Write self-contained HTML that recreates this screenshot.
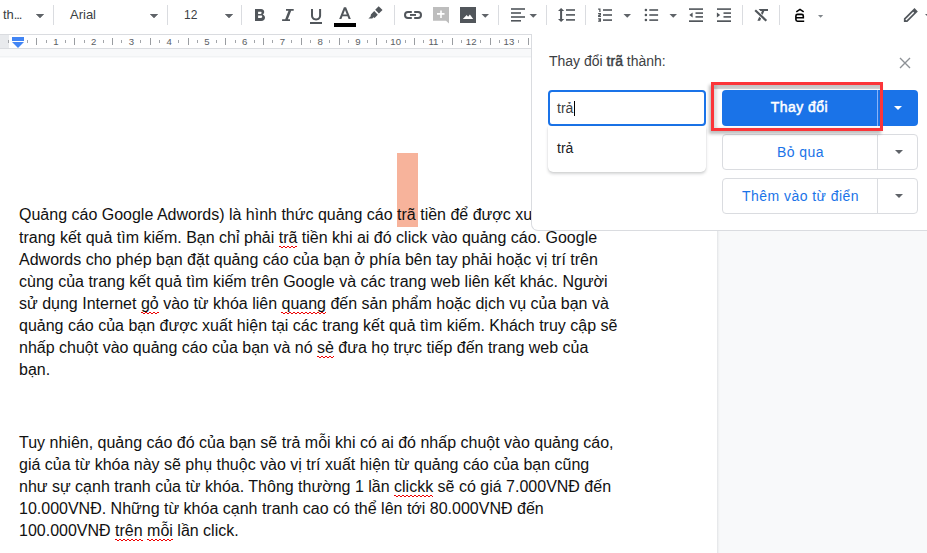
<!DOCTYPE html>
<html><head><meta charset="utf-8">
<style>
*{box-sizing:border-box}
html,body{margin:0;padding:0}
body{width:927px;height:553px;overflow:hidden;position:relative;background:#fff;font-family:"Liberation Sans",sans-serif}
.a{position:absolute}
.sep{position:absolute;top:5px;width:1px;height:20px;background:#dadce0}
.arr{position:absolute;width:0;height:0;border-left:4px solid transparent;border-right:4px solid transparent;border-top:4px solid #5f6368}
.tb{color:#3c4043;font-size:13px;position:absolute;top:7px;line-height:16px}
.rn{position:absolute;top:35px;font-size:10px;line-height:12px;color:#444;text-align:center;width:20px}
.tick{position:absolute;width:1px;background:#9aa0a6}
.doc{position:absolute;left:19px;font-size:16px;line-height:22.1px;color:#111;white-space:pre}
.sq{position:relative}.sq::after{content:"";position:absolute;left:0;right:0;top:17px;height:2px;background:repeating-linear-gradient(to right,#e00 0 2px,transparent 2px 4px) 0 0/100% 1px no-repeat,repeating-linear-gradient(to right,transparent 0 2px,#e00 2px 4px) 0 1px/100% 1px no-repeat}
.btn{position:absolute;left:722px;width:196px;height:36px;border:1px solid #dadce0;border-radius:4px;background:#fff}
.btn .lbl{position:absolute;left:0;width:155px;top:0;height:34px;line-height:34px;text-align:center;color:#1a73e8;font-size:14px;letter-spacing:0.45px}
.btn .dv{position:absolute;left:154px;top:0;width:1px;height:34px;background:#dadce0}
</style></head><body>

<!-- toolbar -->
<div class="tb" style="left:3px">th<span style="letter-spacing:-1.1px">...</span></div>
<div class="arr" style="left:36px;top:14px"></div>
<div class="sep" style="left:53px"></div>
<div class="tb" style="left:70px">Arial</div>
<div class="arr" style="left:150px;top:14px"></div>
<div class="sep" style="left:167px"></div>
<div class="tb" style="left:184px;font-size:12px">12</div>
<div class="arr" style="left:225px;top:14px"></div>
<div class="sep" style="left:241px"></div>
<div class="sep" style="left:394px"></div>
<div class="sep" style="left:498px"></div>
<div class="sep" style="left:546px"></div>
<div class="sep" style="left:585px"></div>
<div class="sep" style="left:742px"></div>
<div class="sep" style="left:779px"></div>

<svg class="a" style="left:0;top:0" width="927" height="34" viewBox="0 0 927 34">
<g fill="#51565b">
<!-- B -->
<path fill-rule="evenodd" d="M255 9H261C263.2 9 264.2 10.4 264.2 12C264.2 13.1 263.6 14 262.7 14.5C264 14.9 265 16.1 265 17.6C265 19.6 263.6 21 261.2 21H255ZM258.1 11.7V13.9H260.6C261.3 13.9 261.6 13.4 261.6 12.8C261.6 12.2 261.3 11.7 260.6 11.7ZM258.1 15.5V17.9H261C261.8 17.9 262.2 17.3 262.2 16.7C262.2 16.1 261.8 15.5 261 15.5Z"/>
<!-- I -->
<path d="M286 9H293.7V10.8H291.2L287.9 19.2H290V21H282.1V19.2H285.2L288.5 10.8H286Z"/>
<!-- U -->
<path d="M311 9H313V15.5C313 17.3 314.3 18.5 316.1 18.5C317.9 18.5 319.1 17.3 319.1 15.5V9H321.1V15.5C321.1 18.5 319 20.4 316.1 20.4C313.2 20.4 311 18.5 311 15.5Z"/>
<rect x="310" y="22" width="12" height="2"/>
<!-- A -->
<path fill-rule="evenodd" d="M343.9 7.3H346.1L350.8 19H348.6L347.5 16.3H342.5L341.4 19H339.2ZM343.2 14.5H346.8L345 10Z"/>
<!-- highlighter -->
<path d="M378.7 6.3L382.5 9.9L378.9 13.4L375.2 9.8Z"/>
<path d="M374.2 11.1L377.8 14.7L374.6 18L373.4 17.3L372.3 18.6H368.4L370.6 16.4L370.9 14.5Z"/>
<!-- link -->
<path fill="none" stroke="#51565b" stroke-width="2" d="M411.8 12H408A3 3 0 0 0 408 18H411.8M414.2 12H418A3 3 0 0 1 418 18H414.2"/>
<rect x="410" y="14" width="6" height="1.9"/>
<!-- image -->
<path fill-rule="evenodd" d="M460 7H476V23H460ZM462.8 19H473.2L469.9 14.4L468.1 16.8L466.7 15.1Z"/>
<!-- align left -->
<rect x="511" y="8.2" width="14" height="1.6"/><rect x="511" y="12.2" width="10" height="1.6"/><rect x="511" y="16.2" width="14" height="1.6"/><rect x="511" y="20" width="10" height="1.6"/>
<!-- line spacing -->
<path d="M561.1 8L564.2 10.9H562.1V19H564.2L561.1 22L558 19H560.1V10.9H558Z"/>
<rect x="566" y="9.2" width="9" height="1.6"/><rect x="566" y="14.1" width="9" height="1.6"/><rect x="566" y="19.1" width="9" height="1.6"/>
<!-- numbered -->
<rect x="603" y="9.2" width="9" height="1.6"/><rect x="603" y="14.2" width="9" height="1.6"/><rect x="603" y="19.3" width="9" height="1.6"/>
<path fill="none" stroke="#51565b" stroke-width="1.25" d="M598.1 9H599.9V11.9M598.1 13.7H600.4V14.7L598.7 15.6V16.3H601M598.1 18.8H600.4V21.2H598.1M599.2 20H600.4"/>
<!-- bulleted -->
<circle cx="645.9" cy="10" r="1.3"/><circle cx="645.9" cy="15" r="1.3"/><circle cx="645.9" cy="20" r="1.3"/>
<rect x="649.3" y="9.2" width="8.8" height="1.6"/><rect x="649.3" y="14.2" width="8.8" height="1.6"/><rect x="649.3" y="19.3" width="8.8" height="1.6"/>
<!-- decrease indent -->
<rect x="689" y="8.3" width="14" height="1.6"/><rect x="695.5" y="12.3" width="7.5" height="1.6"/><rect x="695.5" y="16.1" width="7.5" height="1.6"/><rect x="689" y="20.3" width="14" height="1.7"/>
<path d="M692.6 12.5V17.4L689.3 14.95Z"/>
<!-- increase indent -->
<rect x="717" y="8.3" width="14" height="1.6"/><rect x="723.5" y="12.3" width="7.5" height="1.6"/><rect x="723.5" y="16.1" width="7.5" height="1.6"/><rect x="717" y="20.3" width="14" height="1.7"/>
<path d="M716.9 12.5V17.4L720.2 14.95Z"/>
<!-- clear formatting -->
<path d="M758.6 9H768V10.9H760.4ZM762.2 10.5H764.5L760.1 20.8H757.4Z"/>
<path stroke="#fff" stroke-width="3.8" d="M754.5 9.6L766.6 21"/>
<path stroke="#51565b" stroke-width="2.2" d="M755.2 10.2L766.3 20.7"/>
<!-- pencil -->
<path d="M914.5 8.1L917.8 11.4L907.3 21.9H903.9V18.6Z"/>
<path stroke="#fff" stroke-width="1.4" d="M905.9 20L913.7 12.2"/>
</g>
<g fill="#5f6368">
<path d="M36 14H44L40 18Z"/><path d="M150 14H158L154 18Z"/><path d="M225 14H233L229 18Z"/>
<path d="M481.5 14H489L485.25 17.8Z"/>
<path d="M529.5 14H537L533.25 17.8Z"/>
<path d="M623.5 14H631L627.25 17.8Z"/>
<path d="M669.5 14H677L673.25 17.8Z"/>

<path d="M925 14H933L929 18Z"/>
</g>
<path fill="#80868b" d="M818 15H823.2L820.6 17.8Z"/>
<!-- comment disabled -->
<path fill="#bdbdbd" d="M433 7H449V23.5L446 20.8H433Z"/>
<path fill="#fff" d="M440.2 10.4H441.8V13.1H444.5V14.7H441.8V17.9H440.2V14.7H437V13.1H440.2Z"/>
<!-- text color bar -->
<rect x="334" y="23" width="22" height="4" fill="#000"/>
</svg>
<svg class="a" style="left:790px;top:5px" width="20" height="20" viewBox="790 5 20 20"><path fill="none" stroke="#000" stroke-width="1.6" d="M795.9 17.7H803.3V16Q803.3 14.4 801.7 14.4H797.5Q795.9 14.4 795.9 16V19.6Q795.9 21.2 797.5 21.2H804.2M796.3 11.8L800 9.4L803.7 11.8"/></svg>

<!-- ruler -->
<svg class="a" style="left:0;top:0" width="531" height="60" viewBox="0 0 531 60">
<rect x="0" y="34" width="531" height="1" fill="#dadce0"/>
<rect x="0" y="35" width="531" height="13" fill="#fff"/>
<rect x="0" y="35" width="9" height="13" fill="#e8eaed"/>
<rect x="0" y="48" width="531" height="1" fill="#dadce0"/>
<rect x="0" y="49" width="531" height="7" fill="#f8f9fa"/>
<rect x="0" y="56" width="531" height="1" fill="#f1f3f4"/>
<rect x="0" y="57" width="531" height="1" fill="#f8f9fa"/>
<g font-family="Liberation Sans" font-size="9.6" fill="#5a5e63"><rect x="8" y="40" width="1" height="3" fill="#a3a6aa"/>
<rect x="27" y="40" width="1" height="3" fill="#a3a6aa"/>
<rect x="36" y="38" width="1" height="7" fill="#9a9da1"/>
<rect x="46" y="40" width="1" height="3" fill="#a3a6aa"/>
<text x="55.84" y="45" text-anchor="middle">1</text>
<rect x="65" y="40" width="1" height="3" fill="#a3a6aa"/>
<rect x="74" y="38" width="1" height="7" fill="#9a9da1"/>
<rect x="84" y="40" width="1" height="3" fill="#a3a6aa"/>
<text x="93.60" y="45" text-anchor="middle">2</text>
<rect x="103" y="40" width="1" height="3" fill="#a3a6aa"/>
<rect x="112" y="38" width="1" height="7" fill="#9a9da1"/>
<rect x="121" y="40" width="1" height="3" fill="#a3a6aa"/>
<text x="131.36" y="45" text-anchor="middle">3</text>
<rect x="140" y="40" width="1" height="3" fill="#a3a6aa"/>
<rect x="150" y="38" width="1" height="7" fill="#9a9da1"/>
<rect x="159" y="40" width="1" height="3" fill="#a3a6aa"/>
<text x="169.12" y="45" text-anchor="middle">4</text>
<rect x="178" y="40" width="1" height="3" fill="#a3a6aa"/>
<rect x="188" y="38" width="1" height="7" fill="#9a9da1"/>
<rect x="197" y="40" width="1" height="3" fill="#a3a6aa"/>
<text x="206.88" y="45" text-anchor="middle">5</text>
<rect x="216" y="40" width="1" height="3" fill="#a3a6aa"/>
<rect x="225" y="38" width="1" height="7" fill="#9a9da1"/>
<rect x="235" y="40" width="1" height="3" fill="#a3a6aa"/>
<text x="244.64" y="45" text-anchor="middle">6</text>
<rect x="254" y="40" width="1" height="3" fill="#a3a6aa"/>
<rect x="263" y="38" width="1" height="7" fill="#9a9da1"/>
<rect x="272" y="40" width="1" height="3" fill="#a3a6aa"/>
<text x="282.40" y="45" text-anchor="middle">7</text>
<rect x="291" y="40" width="1" height="3" fill="#a3a6aa"/>
<rect x="301" y="38" width="1" height="7" fill="#9a9da1"/>
<rect x="310" y="40" width="1" height="3" fill="#a3a6aa"/>
<text x="320.16" y="45" text-anchor="middle">8</text>
<rect x="329" y="40" width="1" height="3" fill="#a3a6aa"/>
<rect x="339" y="38" width="1" height="7" fill="#9a9da1"/>
<rect x="348" y="40" width="1" height="3" fill="#a3a6aa"/>
<text x="357.92" y="45" text-anchor="middle">9</text>
<rect x="367" y="40" width="1" height="3" fill="#a3a6aa"/>
<rect x="376" y="38" width="1" height="7" fill="#9a9da1"/>
<rect x="386" y="40" width="1" height="3" fill="#a3a6aa"/>
<text x="395.68" y="45" text-anchor="middle">10</text>
<rect x="405" y="40" width="1" height="3" fill="#a3a6aa"/>
<rect x="414" y="38" width="1" height="7" fill="#9a9da1"/>
<rect x="423" y="40" width="1" height="3" fill="#a3a6aa"/>
<text x="433.44" y="45" text-anchor="middle">11</text>
<rect x="442" y="40" width="1" height="3" fill="#a3a6aa"/>
<rect x="452" y="38" width="1" height="7" fill="#9a9da1"/>
<rect x="461" y="40" width="1" height="3" fill="#a3a6aa"/>
<text x="471.20" y="45" text-anchor="middle">12</text>
<rect x="480" y="40" width="1" height="3" fill="#a3a6aa"/>
<rect x="490" y="38" width="1" height="7" fill="#9a9da1"/>
<rect x="499" y="40" width="1" height="3" fill="#a3a6aa"/>
<text x="508.96" y="45" text-anchor="middle">13</text>
<rect x="518" y="40" width="1" height="3" fill="#a3a6aa"/>
<rect x="528" y="38" width="1" height="7" fill="#9a9da1"/></g>
<rect x="12" y="37" width="12" height="4" fill="#4285f4"/>
<path d="M12 42H24L18 48Z" fill="#4285f4"/>
</svg>
<!-- page bg right -->
<div class="a" style="left:717px;top:57px;width:210px;height:496px;background:linear-gradient(to right,#e2e3e5 0,#eceef0 1px,#f4f5f6 2px,#f8f9fa 3px)"></div>

<!-- highlight -->
<div class="a" style="left:397px;top:153px;width:21px;height:74px;background:#f7b39b"></div>

<!-- doc text -->
<div class="doc" style="top:204px">Quảng cáo Google Adwords) là hình thức quảng cáo trã tiền để được xuất hiện</div>
<div class="doc" style="top:227px">trang kết quả tìm kiếm. Bạn chỉ phải <span class="sq">trã</span> tiền khi ai đó click vào quảng cáo. Google</div>
<div class="doc" style="top:249px">Adwords cho phép bạn đặt quảng cáo của bạn ở phía bên tay phải hoặc vị trí trên</div>
<div class="doc" style="top:271px">cùng của trang kết quả tìm kiếm trên Google và các trang web liên kết khác. Người</div>
<div class="doc" style="top:293px">sử dụng Internet <span class="sq">gỏ</span> vào từ khóa liên <span class="sq">quang</span> đến sản phẩm hoặc dịch vụ của bạn và</div>
<div class="doc" style="top:315px">quảng cáo của bạn được xuất hiện tại các trang kết quả tìm kiếm. Khách truy cập sẽ</div>
<div class="doc" style="top:337px">nhấp chuột vào quảng cáo của bạn và nó <span class="sq">sẻ</span> đưa họ trực tiếp đến trang web của</div>
<div class="doc" style="top:359px">bạn.</div>
<div class="doc" style="top:432px">Tuy nhiên, quảng cáo đó của bạn sẽ trả mỗi khi có ai đó nhấp chuột vào quảng cáo,</div>
<div class="doc" style="top:454px">giá của từ khóa này sẽ phụ thuộc vào vị trí xuất hiện từ quảng cáo của bạn cũng</div>
<div class="doc" style="top:476px">như sự cạnh tranh của từ khóa. Thông thường 1 lần <span class="sq">clickk</span> sẽ có giá 7.000VNĐ đến</div>
<div class="doc" style="top:498px">10.000VNĐ. Những từ khóa cạnh tranh cao có thể lên tới 80.000VNĐ đến</div>
<div class="doc" style="top:520px">100.000VNĐ <span class="sq">trên</span> <span class="sq">mỗi</span> lần click.</div>

<!-- popup -->
<div class="a" style="left:531px;top:34px;width:400px;height:197px;background:#fff;border-left:1px solid #dadce0;border-bottom:1px solid #dadce0;border-radius:0 0 0 7px"></div>
<div class="a" style="left:549px;top:52px;font-size:14px;line-height:18px;color:#3c4043">Thay đổi <span style="-webkit-text-stroke:0.45px #3c4043">trã</span> thành:</div>
<svg class="a" style="left:899px;top:57px" width="12" height="12" viewBox="0 0 12 12"><path d="M1 1L11 11M11 1L1 11" stroke="#8d9196" stroke-width="1.4"/></svg>
<div class="a" style="left:548px;top:90px;width:158px;height:36px;border:2px solid #1a73e8;border-radius:4px"></div>
<div class="a" style="left:557px;top:99px;font-size:14px;line-height:18px;color:#3c4043">trả</div>
<div class="a" style="left:574px;top:101px;width:1px;height:15px;background:#000"></div>
<div class="a" style="left:548px;top:126px;width:158px;height:46px;background:#fff;border-radius:0 0 5px 5px;box-shadow:0 2px 3px rgba(60,64,67,.22),0 0 1px rgba(60,64,67,.2)"></div>
<div class="a" style="left:557px;top:139px;font-size:14px;line-height:18px;color:#202124">trả</div>

<div class="a" style="left:722px;top:90px;width:196px;height:36px;background:#1a73e8;border-radius:4px"></div>
<div class="a" style="left:722px;top:90px;width:155px;height:36px;line-height:34px;text-align:center;color:#fff;font-size:14px;letter-spacing:0.45px;-webkit-text-stroke:0.5px #fff">Thay đổi</div>
<div class="a" style="left:877px;top:90px;width:1px;height:36px;background:#8ab4f8"></div>
<div class="arr" style="left:894px;top:106px;border-top-color:#fff"></div>

<div class="btn" style="top:134px"><div class="lbl">Bỏ qua</div><div class="dv"></div><div class="arr" style="left:172px;top:15px"></div></div>
<div class="btn" style="top:178px"><div class="lbl">Thêm vào từ điển</div><div class="dv"></div><div class="arr" style="left:172px;top:15px"></div></div>

<!-- red annotation -->
<div class="a" style="left:711px;top:82px;width:172px;height:49px;border:3px solid #fb3539;box-shadow:-2px 3px 3px rgba(0,0,0,.25), inset 0 4px 1px rgba(0,0,0,.2), inset 3px 0 3px rgba(0,0,0,.12)"></div>

</body></html>
